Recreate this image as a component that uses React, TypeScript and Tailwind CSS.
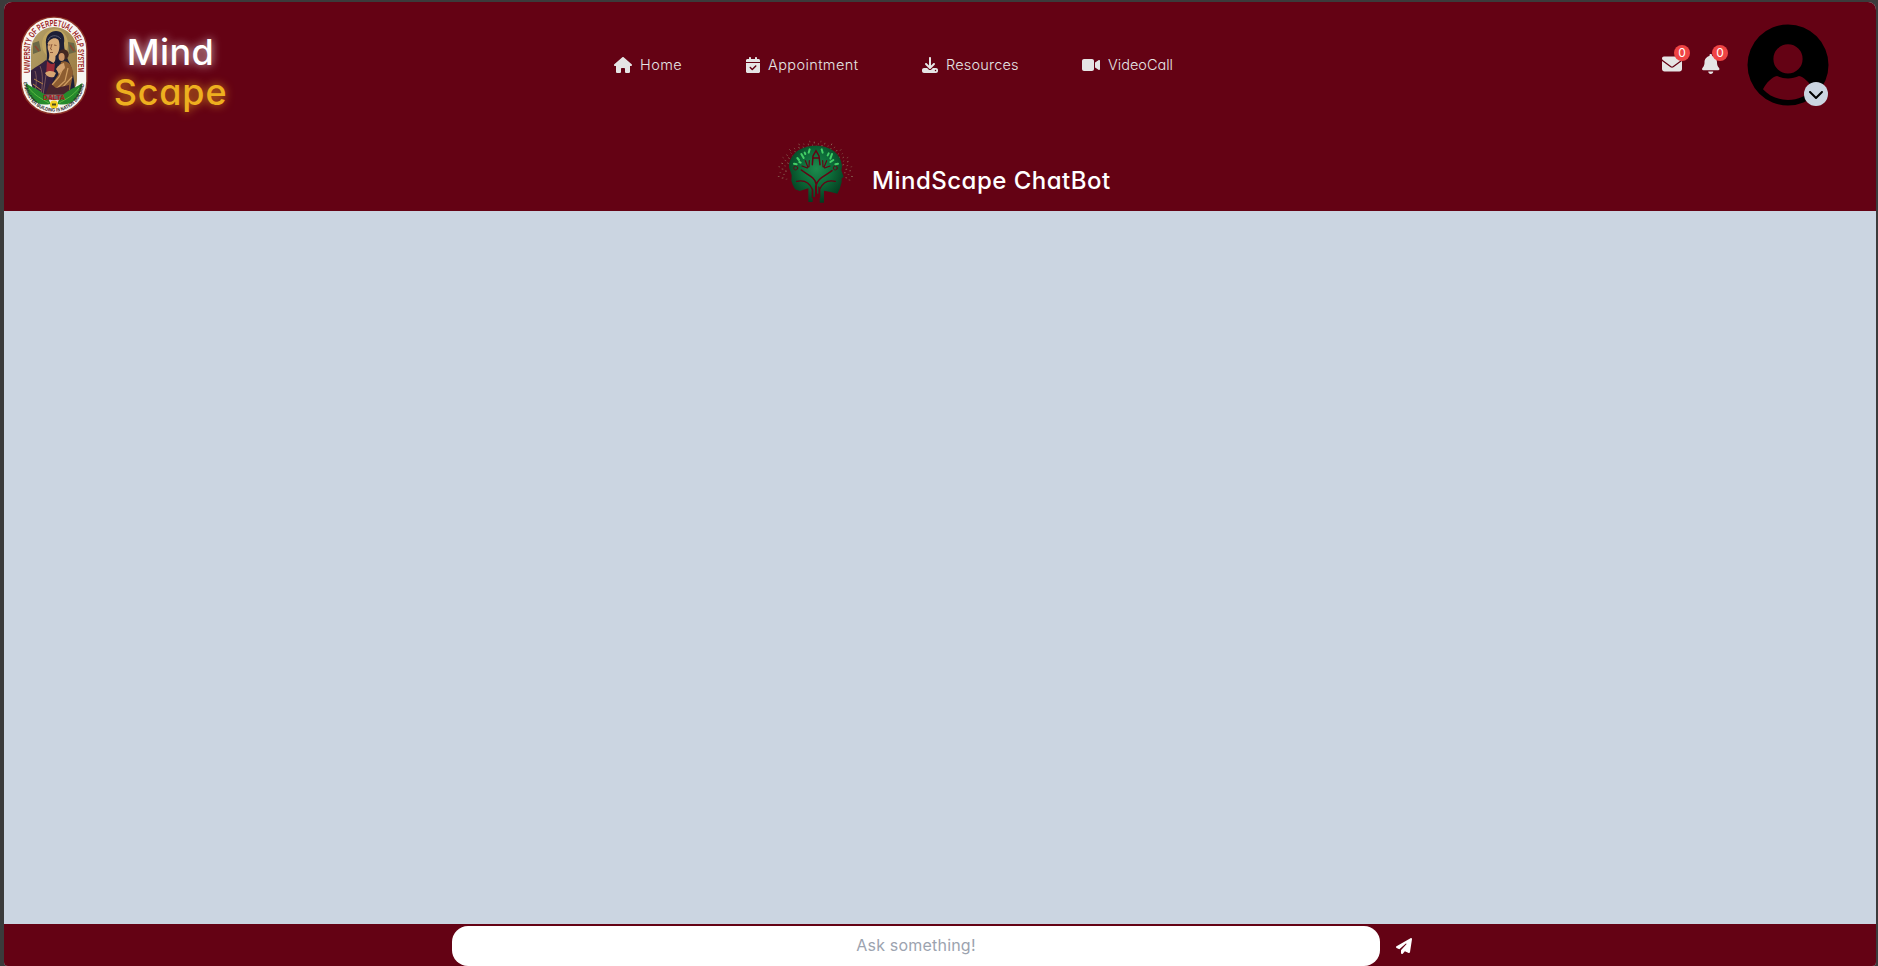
import {
  FaBell,
  FaCalendarCheck,
  FaChevronDown,
  FaDownload,
  FaEnvelope,
  FaHouse,
  FaPaperPlane,
  FaVideo,
} from "react-icons/fa6";
import type { ReactNode } from "react";

function UniversityEmblem() {
  return (
    <svg viewBox="0 0 66 97" className="h-[97px] w-[66px] shrink-0 overflow-visible">
      <defs>
        <path id="ringTop" d="M9 56V33A24 24 0 0 1 57 33V56" />
        <path id="ringBottom" d="M2.6 65C4 82 17 94.6 33 94.6S62 82 63.4 65" />
        <clipPath id="portrait">
          <path d="M10 33a23 23 0 0 1 46 0v29c0 12-10 21-23 21S10 74 10 62z" />
        </clipPath>
        <linearGradient id="gold" x1="0" y1="0" x2="1" y2="1">
          <stop offset="0" stopColor="#b5a069" />
          <stop offset="0.5" stopColor="#a48c52" />
          <stop offset="1" stopColor="#9b7440" />
        </linearGradient>
      </defs>
      <rect x="-0.5" y="-0.5" width="67" height="98" rx="33" fill="#8d3528" />
      <rect x="0.8" y="0.8" width="64.4" height="95.4" rx="32" fill="#f8f5f1" />
      <g clipPath="url(#portrait)">
        <rect x="8" y="8" width="50" height="80" fill="url(#gold)" />
        <path d="M12 26l6-2 2 10-8 3zM47 25l6 1 2 9-7 2z" fill="#6b6847" />
        <path d="M14 29l4 5M49 28l4 6" stroke="#8e4730" strokeWidth="1.6" />
        <ellipse cx="34" cy="27" rx="13" ry="15" fill="#c0a560" />
        <path
          d="M25 27c-1-8 4-13 10-13 7 0 9 6 8 12 0 7 2 11 4 17 5 8 7 22 8 46H9c-1-15 1-29 6-32 6-4 11-9 11-18z"
          fill="#1d1f36"
        />
        <path d="M8 55c6-5 11-7 17-12l7 8 1 30-22-4z" fill="#35203f" />
        <path d="M26.5 27c1-5 8-8 11-4 2 5 1 13-3 16 0 3 0 5-2 7l-5-3c1-3 1-6 0-9-1-2-1-4-.5-7z" fill="#d9ab78" />
        <path d="M31 27l-1.5 5 1.5 1M29 35.5h3M27.5 28h2M33 28l2.5.5" stroke="#7a452c" strokeWidth="0.8" fill="none" />
        <path d="M27 23c2-5 9-6 13-1" stroke="#5d6275" strokeWidth="0.9" fill="none" />
        <path d="M26 44c3 3 5 4 8 2l-1 10-8 2z" fill="#9a2a36" />
        <path d="M19 49c4 9 2 20 1 32M14 54c3 8 0 18 0 24M25 58l-3 20" stroke="#805a5c" strokeWidth="0.9" fill="none" />
        <path d="M40 45c6-3 12 3 12 12l-3 16-18 7-2-10 8-12z" fill="#8d5d31" />
        <path d="M43 49l-5 11-7 8M47 51l-3 13-10 9M51 60l-11 12" stroke="#cf9d62" strokeWidth="1.2" fill="none" />
        <circle cx="42.5" cy="37.5" r="5.2" fill="#432821" />
        <ellipse cx="40.6" cy="40" rx="3" ry="4" fill="#cc9465" />
        <path d="M35 52c2-4 6-6 8-6l1 5-6 6z" fill="#d3a06c" />
        <path d="M24 56c4-3 8-2 11 0l-2 4c-4 1-7 0-9-4z" fill="#d8a672" />
        <path d="M13 62l9 5M12 67l8 6" stroke="#b88349" strokeWidth="1" />
        <path d="M29 66l6 5 13-3v10H24z" fill="#4a242d" />
      </g>
      <path d="M22 77.5h22v6H22z" fill="#d9b6a0" opacity="0.45" />
      <path d="M4.5 66c9 6 22 9 25 21-13 3-23-5-25-21z" fill="#268a2c" />
      <path d="M61.5 66c-9 6-22 9-25 21 13 3 23-5 25-21z" fill="#268a2c" />
      <path d="M8 71c6 8 13 11 20 15M58 71c-6 8-13 11-20 15" stroke="#5dba42" strokeWidth="1" fill="none" />
      <circle cx="33" cy="87.5" r="4" fill="#f2cf1f" />
      <path d="M31 87.5h4" stroke="#4c4a1b" strokeWidth="2" />
      <text className="font-['Liberation_Sans'] text-[9px] font-bold" fill="#9c1f24">
        <textPath href="#ringTop" textLength="120" lengthAdjust="spacingAndGlyphs">
          UNIVERSITY OF PERPETUAL HELP SYSTEM
        </textPath>
      </text>
      <text className="font-['Liberation_Sans'] text-[5px] font-bold" fill="#26262a">
        <textPath href="#ringBottom" textLength="91" lengthAdjust="spacingAndGlyphs">
          CHARACTER BUILDING IS NATION BUILDING
        </textPath>
      </text>
      <text
        x="22"
        y="83"
        textLength="22"
        lengthAdjust="spacingAndGlyphs"
        className="font-['Liberation_Sans'] text-[6.5px] font-bold"
        fill="#b01822"
      >
        DALTA
      </text>
    </svg>
  );
}

const rays = Array.from({ length: 60 }, (_, i) => {
  const a = Math.PI * (0.93 + (i / 59) * 1.14);
  const k = ((i * 7) % 5) / 4;
  const rx = 86 + k * 22;
  const ry = 78 + k * 16;
  return {
    x1: 136 + Math.cos(a) * rx,
    y1: 130 + Math.sin(a) * ry,
    x2: 136 + Math.cos(a) * (rx + 5),
    y2: 130 + Math.sin(a) * (ry + 5),
    o: 0.5 + ((i * 3) % 4) * 0.15,
  };
});

function BrainTreeLogo() {
  return (
    <svg viewBox="0 0 270 240" className="h-20 w-[90px] shrink-0">
      <defs>
        <radialGradient id="leafGreen" cx="0.5" cy="0.4" r="0.6">
          <stop offset="0" stopColor="#1d8b4d" />
          <stop offset="0.5" stopColor="#0c6a38" />
          <stop offset="1" stopColor="#053a1f" />
        </radialGradient>
      </defs>
      {rays.map((r, i) => (
        <line key={i} x1={r.x1} y1={r.y1} x2={r.x2} y2={r.y2} stroke="#8a6a57" strokeWidth="3" opacity={r.o} />
      ))}
      <path
        d="M57 112C57 70 94 47 138 47c42 0 76 24 78 62l-2 12 7 20-6 4v12l-6 20-7 14-20-5-20-4v36h-13v-46l-4-3v22h-4v-26l-6 2v34h-5v-24l-2 2v37h-13v-41l-26 8-14-5-7-14-4-12 1-16z"
        fill="url(#leafGreen)"
      />
      <g fill="none" stroke="#640214" strokeLinecap="round">
        <path d="M138 164v24M138 162c-2-20-26-28-44-42M140 162c4-20 30-26 46-40" strokeWidth="4.5" />
        <path d="M80 154c24-5 38 3 47 24v24M196 154c-22-5-38 3-47 24v24" strokeWidth="4" />
        <path d="M106 92l8 20M118 92l-1 18M96 108l16 6M170 92l-8 20M158 92l1 18M180 108l-16 6" strokeWidth="3.5" />
        <path d="M127 104l2-26 9-16 9 16 3 26M129 84h18" strokeWidth="4.5" />
        <circle cx="77" cy="114" r="6" strokeWidth="2.5" />
        <circle cx="196" cy="114" r="6" strokeWidth="2.5" />
      </g>
      <g fill="none" stroke="#43cf66" strokeLinecap="round" strokeWidth="6">
        <path d="M72 101l8 2M82 84l5 6M94 72l7 12M119 58l-3 10M155 58l3 10M176 70l-3 6M186 72l-5 14M190 90l-9 6M204 101l-8 2M104 68l2 4M88 96l4 2" />
      </g>
    </svg>
  );
}

function Avatar() {
  return (
    <svg viewBox="0 0 80 80" className="size-20 overflow-visible">
      <path
        fillRule="evenodd"
        fill="#000"
        d="M40 -0.5a40.5 40.5 0 1 1 0 81a40.5 40.5 0 1 1 0-81zM40 19.3a14.6 14.6 0 1 0 0 29.2a14.6 14.6 0 1 0 0-29.2zM29 51C24 52 18 58 15 64.3C21 71 30 75 40 75S59 71 65 64.3C62 58 56 52 51 51C44 54.2 36 54.2 29 51z"
      />
    </svg>
  );
}

function NavItem({ icon, children }: { icon: ReactNode; children: ReactNode }) {
  return (
    <a className="flex items-center gap-2 text-[14.5px] leading-6 font-light whitespace-nowrap">
      {icon}
      {children}
    </a>
  );
}

function CountBadge() {
  return (
    <span className="absolute -top-[9px] left-[10px] flex size-4 items-center justify-center rounded-full bg-[#ef4444] text-[12px] leading-none text-white">
      0
    </span>
  );
}

export default function App() {
  return (
    <div className="h-[966px] w-full bg-[#3b3b3b] pt-0.5 pr-0.5 pl-1 font-['Inter',sans-serif] [font-feature-settings:'cv11']">
      <div className="flex h-full flex-col overflow-hidden rounded-t-lg rounded-b bg-[#cbd5e1]">
        <header className="shrink-0 bg-[#640214]">
          <div className="flex h-[126px] items-center pr-12 pl-[17px] text-[#e5e5e5]">
            <UniversityEmblem />
            <div className="ml-[9px] flex w-[149px] flex-col items-center pt-3.5 text-[36px] leading-10 font-medium">
              <span className="tracking-[0.4px] text-white [text-shadow:0_0_10px_rgba(255,255,255,0.8)]">Mind</span>
              <span className="tracking-[0.8px] text-[#eeb01f] [text-shadow:0_0_10px_rgba(240,176,31,0.8)]">Scape</span>
            </div>
            <nav className="ml-[369px] flex items-center gap-16">
              <NavItem icon={<FaHouse className="h-4 w-[18px]" />}>
                <span className="w-[42px] tracking-[0.4px]">Home</span>
              </NavItem>
              <NavItem icon={<FaCalendarCheck className="h-4 w-3.5" />}>
                <span className="w-[90px] tracking-[0.4px]">Appointment</span>
              </NavItem>
              <NavItem icon={<FaDownload className="size-4" />}>
                <span className="w-[72px] tracking-[0.2px]">Resources</span>
              </NavItem>
              <NavItem icon={<FaVideo className="h-4 w-[18px]" />}>
                <span className="w-[66px]">VideoCall</span>
              </NavItem>
            </nav>
            <div className="ml-auto flex items-center gap-5">
              <div className="relative -mt-0.5 w-5">
                <FaEnvelope className="size-5" />
                <div className="absolute top-0 left-0.5">
                  <CountBadge />
                </div>
              </div>
              <div className="relative -mt-0.5 w-[18px]">
                <FaBell className="h-5 w-[17.5px]" />
                <CountBadge />
              </div>
              <div className="relative ml-2 size-20">
                <Avatar />
                <span className="absolute right-0 -bottom-px flex size-6 items-center justify-center rounded-full bg-[#cbd5e1] text-black">
                  <FaChevronDown className="size-4" />
                </span>
              </div>
            </div>
          </div>
          <div className="flex h-[83px] pt-0.5 pl-[766px]">
            <BrainTreeLogo />
            <h1 className="ml-3 pt-[33px] text-[24px] leading-9 font-medium tracking-[0.5px] whitespace-nowrap text-white">
              MindScape ChatBot
            </h1>
          </div>
        </header>
        <main className="grow" />
        <footer className="flex h-[42px] shrink-0 gap-4 bg-[#640214] pt-0.5 pl-[448px]">
          <input
            placeholder="Ask something!"
            className="h-10 w-[928px] rounded-2xl bg-white pb-0.5 text-center text-[16px] tracking-[0.2px] placeholder:text-[#9ca3af]"
          />
          <button className="flex h-10 items-center text-white">
            <FaPaperPlane className="size-4" />
          </button>
        </footer>
      </div>
    </div>
  );
}
